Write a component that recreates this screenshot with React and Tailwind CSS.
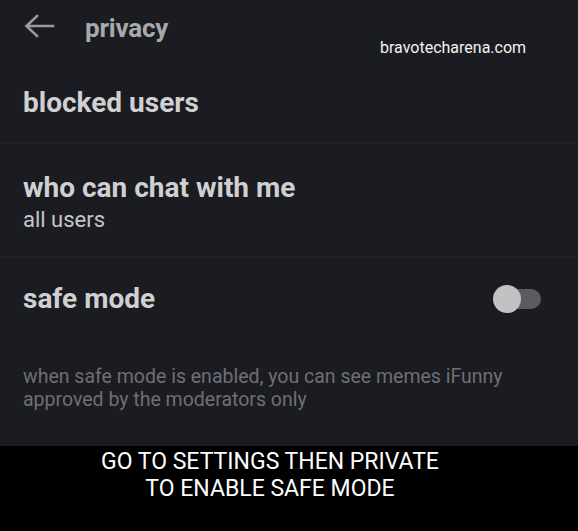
import React from 'react'

const font = { fontFamily: 'Roboto, "Noto Sans", sans-serif' }

export default function App() {
  return (
    <div className="w-[578px] h-[531px] flex flex-col bg-[#1b1c21] overflow-hidden" style={font}>
      <div className="h-[446px] flex flex-col">
        <div className="relative h-[62px] flex items-start pt-[12px] pl-[23px]">
          <svg width="32" height="30" viewBox="0 0 32 30" className="-mt-[1px]">
            <path d="M30 15H4M14 5L3.5 15L14 25" fill="none" stroke="#9b9b9e" strokeWidth="2.6" strokeLinecap="square" />
          </svg>
          <span className="ml-[30px] text-[26px] font-bold leading-[32px] text-[#a9a9ac] tracking-[-0.2px]">privacy</span>
          <span className="absolute left-[380px] top-[37px] text-[16px] text-[#f2f2f2] leading-[22px]">bravotecharena.com</span>
        </div>
        <div className="h-[80px] flex items-center pl-[23px] pt-[2px]">
          <span className="text-[28px] font-bold text-[#d0d0d3] leading-[34px]">blocked users</span>
        </div>
        <div className="h-[2px] bg-[#23242a]" />
        <div className="h-[112px] flex flex-col justify-center pl-[23px] pt-[4px]">
          <span className="text-[28px] font-bold text-[#d0d0d3] leading-[34px]">who can chat with me</span>
          <span className="text-[22px] text-[#c6c6c9] leading-[28px] mt-[1px]">all users</span>
        </div>
        <div className="h-[2px] bg-[#23242a]" />
        <div className="h-[84px] flex items-center justify-between pl-[23px] pr-[37px] pb-[2px]">
          <span className="text-[28px] font-bold text-[#d0d0d3] leading-[34px]">safe mode</span>
          <div className="relative w-[48px] h-[28px] flex items-center">
            <div className="absolute left-[12px] right-0 h-[20px] rounded-full bg-[#5b5b60]" />
            <div className="absolute left-0 w-[28px] h-[28px] rounded-full bg-[#c2c2c4]" />
          </div>
        </div>
        <div className="pl-[23px] pt-[23px] pr-[30px]">
          <p className="text-[19.5px] leading-[23px] text-[#6f6f74]">
            when safe mode is enabled, you can see memes iFunny approved by the moderators only
          </p>
        </div>
      </div>
      <div className="flex-1 bg-black flex flex-col items-center pt-[2px] pr-[38px]">
        <p className="text-[23px] leading-[27px] text-white text-center">
          GO TO SETTINGS THEN PRIVATE
          <br />
          TO ENABLE SAFE MODE
        </p>
      </div>
    </div>
  )
}
